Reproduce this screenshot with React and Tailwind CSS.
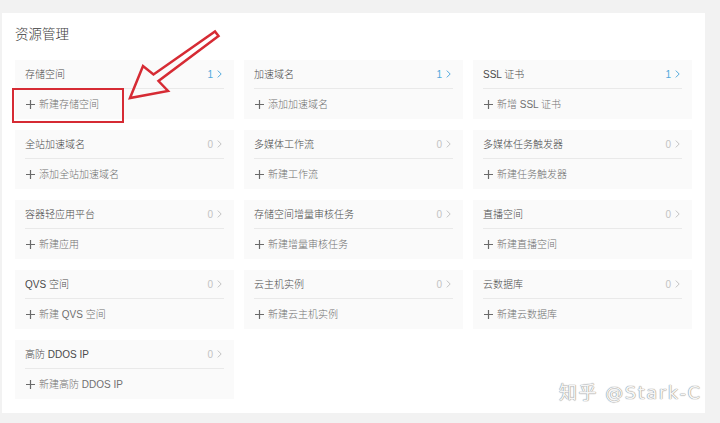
const resources = [
  { name: '存储空间', count: 1, action: '新建存储空间' },
  { name: '加速域名', count: 1, action: '添加加速域名' },
  { name: 'SSL 证书', count: 1, action: '新增 SSL 证书' },
  { name: '全站加速域名', count: 0, action: '添加全站加速域名' },
  { name: '多媒体工作流', count: 0, action: '新建工作流' },
  { name: '多媒体任务触发器', count: 0, action: '新建任务触发器' },
  { name: '容器轻应用平台', count: 0, action: '新建应用' },
  { name: '存储空间增量审核任务', count: 0, action: '新建增量审核任务' },
  { name: '直播空间', count: 0, action: '新建直播空间' },
  { name: 'QVS 空间', count: 0, action: '新建 QVS 空间' },
  { name: '云主机实例', count: 0, action: '新建云主机实例' },
  { name: '云数据库', count: 0, action: '新建云数据库' },
  { name: '高防 DDOS IP', count: 0, action: '新建高防 DDOS IP' },
]

function Chevron() {
  return (
    <svg width="5" height="8" viewBox="0 0 5 8" fill="none" stroke="currentColor" strokeWidth="1">
      <path d="M0.8 0.6 L4.2 4 L0.8 7.4" />
    </svg>
  )
}

function Plus() {
  return (
    <svg width="9" height="9" viewBox="0 0 9 9" stroke="#6a6a6a" strokeWidth="1.2">
      <path d="M4.5 0 V9 M0 4.5 H9" />
    </svg>
  )
}

function ResourceCard({ name, count, action }) {
  return (
    <div className="flex h-[59px] flex-col bg-[#fafafa] px-[10px]">
      <div className="flex h-[28px] items-center justify-between">
        <span className="text-[10px] font-light text-[#4a4a4a]">{name}</span>
        <span className={`mr-[2px] flex items-center gap-[4px] text-[10px] ${count > 0 ? 'text-[#52a9dc]' : 'text-[#c2c2c2]'}`}>
          {count}
          <Chevron />
        </span>
      </div>
      <div className="h-px bg-[#e9e9e9]" />
      <div className="flex h-[30px] items-center gap-[4px] pl-[1px]">
        <Plus />
        <span className="text-[10px] font-light text-[#707070]">{action}</span>
      </div>
    </div>
  )
}

export default function App() {
  return (
    <div
      className="relative h-[423px] w-[720px] overflow-hidden bg-[#f2f2f2]"
      style={{ fontFamily: '"Liberation Sans", "Noto Sans CJK SC", sans-serif' }}
    >
      <div className="ml-[2px] mt-[13px] h-[400px] w-[703px] bg-white pl-[13px] pt-[12px]">
        <h1 className="h-[20px] text-[13.5px] font-light leading-[20px] text-[#3a3a3a]">资源管理</h1>
        <div className="mt-[15px] grid grid-cols-[repeat(3,219px)] gap-x-[10px] gap-y-[11px]">
          {resources.map((r) => (
            <ResourceCard key={r.name} {...r} />
          ))}
        </div>
      </div>

      {/* red callout around the first action */}
      <div className="absolute left-[12px] top-[88px] h-[35px] w-[112px] border-[2.5px] border-[#d62b34]" />
      <svg className="absolute left-0 top-0" width="720" height="423" fill="none">
        <polygon
          points="130,98 143,66 153.5,74.5 215,31.5 218.5,36 158.5,81 168,91"
          stroke="#d62b34"
          strokeWidth="2.5"
          strokeLinejoin="miter"
        />
      </svg>

      <div
        className="absolute left-[559px] top-[382px] text-[18px] leading-[22px] tracking-[1.5px] text-[#f6f6f6] [text-shadow:0_0_1px_#888,0_0_1px_#888]"
        style={{ fontFamily: '"DejaVu Sans", "Noto Sans CJK SC", sans-serif' }}
      >
        知乎 @Stark-C
      </div>
    </div>
  )
}
